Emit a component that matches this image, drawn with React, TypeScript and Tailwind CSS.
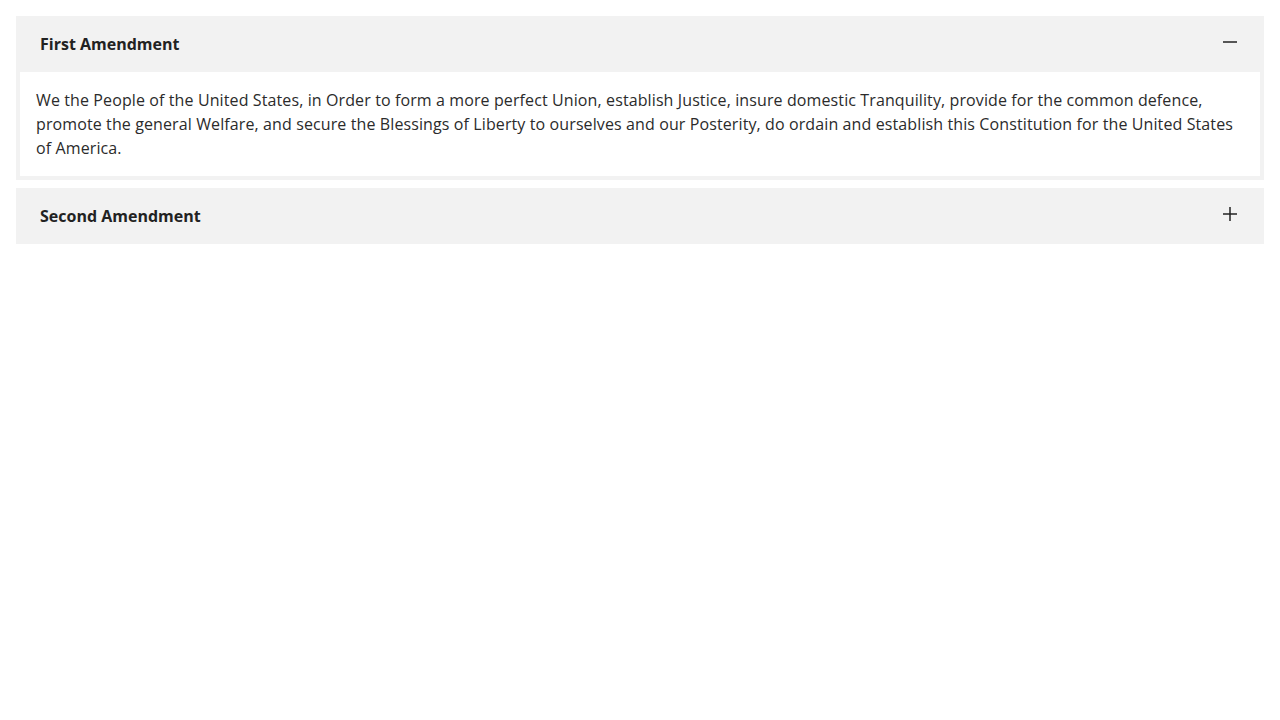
import { useState } from "react";

const items = [
  {
    title: "First Amendment",
    body: "We the People of the United States, in Order to form a more perfect Union, establish Justice, insure domestic Tranquility, provide for the common defence, promote the general Welfare, and secure the Blessings of Liberty to ourselves and our Posterity, do ordain and establish this Constitution for the United States of America.",
  },
  {
    title: "Second Amendment",
    body: "A well regulated Militia, being necessary to the security of a free State, the right of the people to keep and bear Arms, shall not be infringed.",
  },
];

const Icon = ({ open }: { open: boolean }) => (
  <svg width="16" height="16" viewBox="0 0 16 16" className="-mt-1 text-[#222]">
    <path d="M1 8h14" stroke="currentColor" strokeWidth="1.5" />
    {!open && <path d="M8 1v14" stroke="currentColor" strokeWidth="1.5" />}
  </svg>
);

const App = () => {
  const [open, setOpen] = useState<number | null>(0);

  return (
    <div className="min-h-screen bg-white p-4 text-[#222] font-['Open_Sans',sans-serif]">
      <div className="flex flex-col gap-2">
        {items.map((item, i) => (
          <div key={item.title} className="bg-[#f2f2f2]">
            <button
              onClick={() => setOpen(open === i ? null : i)}
              className="w-full h-14 flex items-center justify-between pl-6 pr-[26px] text-left"
            >
              <span className="text-base font-bold">{item.title}</span>
              <Icon open={open === i} />
            </button>
            {open === i && (
              <div className="px-1 pb-1">
                <div className="bg-white p-4 text-base leading-6 tracking-[0.11px] text-[#2b2b2b]">{item.body}</div>
              </div>
            )}
          </div>
        ))}
      </div>
    </div>
  );
};

export default App;
